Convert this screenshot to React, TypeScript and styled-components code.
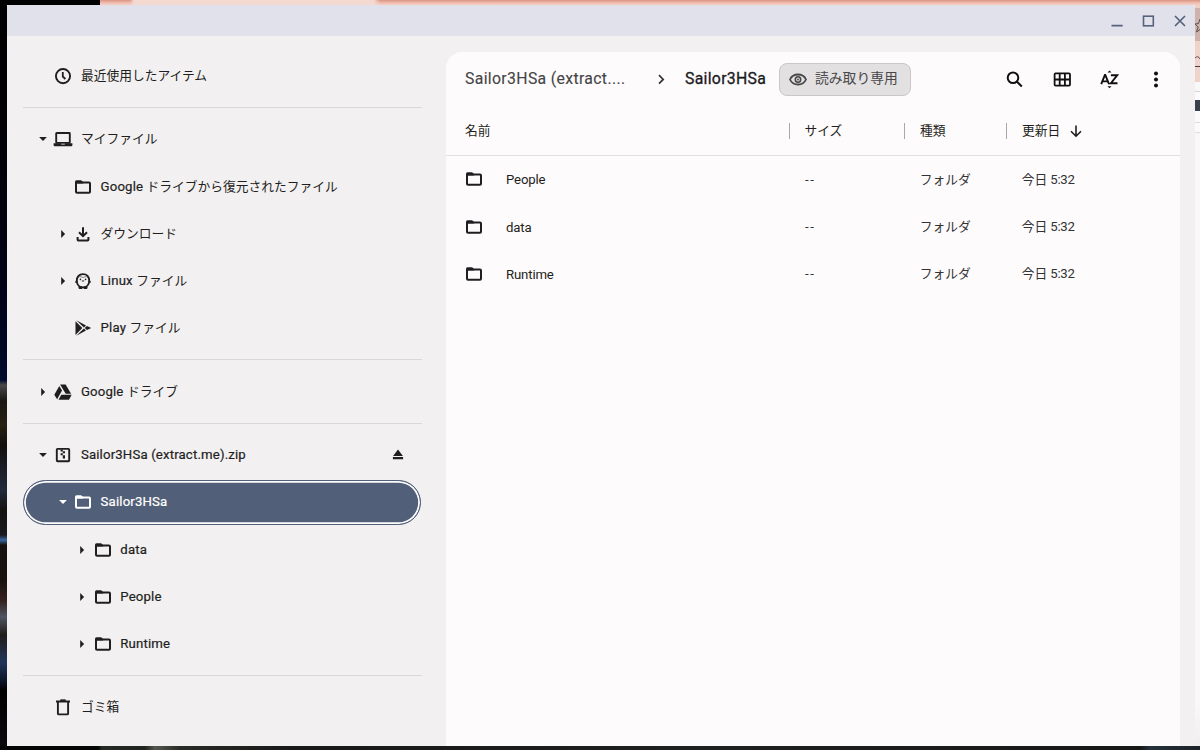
import React from "react";
import styled, { createGlobalStyle, css } from "styled-components";

const Global = createGlobalStyle`
  * { box-sizing: border-box; }
  html, body { margin: 0; padding: 0; overflow: hidden; }
  body {
    font-family: Roboto, "Noto Sans CJK JP", sans-serif;
    font-size: 12.7px;
    color: #1f1f21;
    -webkit-font-smoothing: antialiased;
  }
`;

const Desktop = styled.div`
  width: 1200px;
  height: 750px;
  display: grid;
  grid-template-columns: 6.5px 1188.5px 5px;
  grid-template-rows: 4.5px 741px 4.5px;
  overflow: hidden;
`;

const TopEdge = styled.div`
  grid-column: 1 / -1;
  background:
    linear-gradient(90deg, #000 100px, transparent 100px),
    linear-gradient(90deg, transparent 130px, #f3d9d0 134px, #f3d9d0 374px, transparent 380px),
    linear-gradient(#dd9c8c 0 1px, #eeb5a6 2px, #f3cfc5 5px);
`;

const LeftEdge = styled.div`
  background: linear-gradient(#000 0, #010106 120px, #000318 290px, #000a2c 375px, #4a4a4a 380px, #1a1714 396px, #2a2013 420px, #12100f 440px, #222a3c 485px, #14120f 505px, #17191f 530px, #3a68a0 535px, #15120f 540px, #17120c 575px, #33201f 595px, #505462 612px, #201c1b 630px, #22345c 657px, #0c1428 676px, #000 685px, #0a0a0e 740px);
`;

const RightEdge = styled.div`
  background: linear-gradient(
    #f0cfc5 0 3px, #cfb2ab 3px 36px, #efd3cb 36px 61px, #493f3e 61px 62px, #efd3cb 62px 77px,
    #f8f8f8 77px 86px, #d6d6d6 86px 87px, #fbfbfb 87px 95px, #38414b 95px 106px, #fbfbfb 106px 117px,
    #dcdcdc 117px 118px, #fbfbfb 118px 127px, #dedede 127px 128px, #f8f8f8 128px 700px, #efefef 740px);
  svg { display: block; }
`;

const BottomEdge = styled.div`
  grid-column: 1 / -1;
  background: linear-gradient(90deg, #050505 98px, #262a26 102px, #20241f 145px, #55584f 155px, #292b28 180px, #171817 300px, #1e201f 700px, #171717 1140px, #25313b 1150px, #1c2228 1200px);
`;

const Window = styled.div`
  display: flex;
  flex-direction: column;
  background: #f2f0f1;
  border-radius: 2px 2px 0 0;
  overflow: hidden;
`;

const TitleBar = styled.div`
  height: 31.5px;
  flex: none;
  background: #e1e1eb;
  display: flex;
  justify-content: flex-end;
  align-items: center;
  gap: 15.5px;
  padding-right: 7.5px;
  padding-top: 1px;
  color: #56637c;
  svg { display: block; }
`;

const Body = styled.div`
  flex: 1;
  display: flex;
  min-height: 0;
`;

const Sidebar = styled.nav`
  width: 439.5px;
  padding: 16.4px 24.5px 0 16px;
`;

const Divider = styled.div`
  height: 1px;
  margin: 7.65px 0;
  background: #d9d7d9;
`;

const TreeRow = styled.div<{ $depth: number; $selected?: boolean }>`
  height: 47.2px;
  padding-left: ${(p) => 12 + p.$depth * 19.7}px;
  padding-right: 18px;
  display: flex;
  align-items: center;
  ${(p) =>
    p.$selected &&
    css`
      height: 44.6px;
      margin: 1.3px 0.5px 1.3px 0.5px;
      border-radius: 23px;
      border: 1.4px solid #525f7a;
      box-shadow: inset 0 0 0 1.8px #fff;
      background: #525f78;
      padding-left: ${10.5 + p.$depth * 19.7}px;
      color: #fff;
    `}
  svg { display: block; flex: none; }
`;

const Twisty = styled.span`
  width: 17px;
  height: 16px;
  margin-right: 1.9px;
  display: flex;
  align-items: center;
  justify-content: center;
`;

const TreeIcon = styled.span`
  width: 20px;
  height: 20px;
  margin-right: 7.5px;
`;

const Label = styled.span<{ $light?: boolean; $spacing?: number }>`
  font-size: 13.2px;
  line-height: 18px;
  letter-spacing: ${(p) => p.$spacing ?? 0.16}px;
  -webkit-text-stroke: ${(p) => (p.$light ? 0 : 0.2)}px currentColor;
  white-space: pre;
`;

const KanaRun = styled.span<{ $size?: number }>`
  font-family: "Noto Sans CJK JP", sans-serif;
  font-size: ${(p) => p.$size ?? 12.75}px;
  line-height: 0;
  letter-spacing: 0;
  -webkit-text-stroke: 0;
`;

const Spacer = styled.span`
  flex: 1;
`;

const Panel = styled.main`
  width: 733.5px;
  margin-top: 16px;
  border-radius: 16px 16px 0 0;
  background: #fefbfc;
`;

const Toolbar = styled.div`
  height: 54px;
  padding: 0 13.5px 0 19px;
  display: flex;
  align-items: center;
  svg { display: block; flex: none; }
`;

const Crumb = styled.span<{ $current?: boolean; $width: number }>`
  width: ${(p) => p.$width}px;
  margin-top: -1px;
  font-size: 15.8px;
  letter-spacing: ${(p) => (p.$current ? 0.3 : 0.34)}px;
  -webkit-text-stroke: ${(p) => (p.$current ? 0.3 : 0.12)}px currentColor;
  color: ${(p) => (p.$current ? "#1a1a1c" : "#444446")};
  white-space: nowrap;
`;

const CrumbArrow = styled.span`
  width: 24px;
  margin-right: 12px;
  display: flex;
  justify-content: center;
`;

const ReadOnly = styled.div`
  width: 132px;
  height: 33px;
  border: 1px solid #c9c7c8;
  border-radius: 8px;
  background: #e2e0e1;
  color: #48484a;
  display: flex;
  align-items: center;
  gap: 7.5px;
  padding-left: 7.5px;
`;

const Tools = styled.div`
  margin-left: auto;
  display: flex;
  gap: 27.2px;
`;

const HeadRow = styled.div`
  height: 50px;
  display: grid;
  grid-template-columns: 340px 115.5px 102px 1fr;
  align-items: center;
  padding-left: 2.5px;
  border-bottom: 1px solid #e2e0e1;
`;

const HeadCell = styled.div<{ $first?: boolean }>`
  height: 16px;
  display: flex;
  align-items: center;
  padding-left: ${(p) => (p.$first ? 16.5 : 15)}px;
  border-left: ${(p) => (p.$first ? "none" : "1px solid #a9a7a8")};
  gap: 8.5px;
`;

const FileRow = styled.div`
  height: 47.2px;
  display: grid;
  grid-template-columns: 340px 115.5px 102px 1fr;
  align-items: center;
  padding-left: 2.5px;
  svg { display: block; }
`;

const NameCell = styled.div`
  display: flex;
  align-items: center;
  gap: 22px;
  padding: 0 0 0 15.5px;
`;

const FileName = styled.span`
  padding-top: 1.6px;
`;

const FileIcon = styled.span`
  margin-top: -0.4px;
`;

const Cell = styled.div<{ $inset?: number }>`
  padding-left: ${(p) => p.$inset ?? 15.8}px;
  color: #333335;
`;

const Kana = ({ children, size }: { children: React.ReactNode; size?: number }) => (
  <Label $light>
    <KanaRun $size={size}>{children}</KanaRun>
  </Label>
);

const FolderIcon = () => (
  <svg width="20" height="20" viewBox="0 0 20 20">
    <path d="M3.600 5.400h12.400a1 1 0 0 1 1 1v8.300a1 1 0 0 1-1 1H4a1 1 0 0 1-1-1V6z" fill="none" stroke="currentColor" strokeWidth="2" />
    <path d="M2 6.400V4.700q0-1.500 1.500-1.500h4.600l2 1.700v1.500z" fill="currentColor" />
  </svg>
);

const ClockIcon = () => (
  <svg width="20" height="20" viewBox="0 0 20 20" fill="none" stroke="currentColor">
    <circle cx="10" cy="10.100" r="7.100" strokeWidth="1.900" />
    <path d="M9.800 6v4.500l2.600 2.500" strokeWidth="1.800" />
  </svg>
);

const LaptopIcon = () => (
  <svg width="20" height="20" viewBox="0 0 20 20">
    <path d="M3.200 13.500V4.500q0-.5.5-.5h12.600q.5 0 .5.500v9" fill="none" stroke="currentColor" strokeWidth="1.900" />
    <path d="M.6 14.300h18.800v1.600q0 1.300-1.100 1.300H1.700Q.6 17.200.6 15.900z" fill="currentColor" />
    <path d="M2.600 13h14.800v1.700H2.600z" fill="currentColor" />
    <path d="M8.200 14.700h3.600v.9H8.200z" fill="#f2f0f1" />
  </svg>
);

const DownloadIcon = () => (
  <svg width="20" height="20" viewBox="0 0 20 20" fill="none" stroke="currentColor" strokeWidth="2">
    <path d="M10 3.200v8.600M6 8.200l4 4 4-4M4.600 13v2.700q0 .7.7.7h9.400q.7 0 .7-.7V13" />
  </svg>
);

const LinuxIcon = () => (
  <svg width="20" height="20" viewBox="0 0 20 20">
    <path d="M10 3.100c3.900 0 6.200 2.700 6.200 6.500 0 3.900-2.500 6.900-6.200 6.900s-6.200-3-6.200-6.900c0-3.800 2.300-6.500 6.200-6.500z" fill="none" stroke="currentColor" strokeWidth="1.800" />
    <path d="M4.100 7.400 1.800 11.400l2.500.4zM15.900 7.400l2.300 4-2.500.4zM5.500 15.200h3.600v2.800H6.700q-1.200 0-1.200-1.200zM10.900 15.200h3.600v1.600q0 1.200-1.200 1.200h-2.400z" fill="currentColor" />
    <path d="M4.500 7.700 6.700 5.400 10 6.500l3.300-1.100 2.200 2.300" fill="none" stroke="currentColor" strokeWidth=".5" />
    <circle cx="7.400" cy="8.400" r=".8" fill="currentColor" />
    <circle cx="12.600" cy="8.400" r=".8" fill="currentColor" />
    <path d="M8.500 9.400h3L10 11z" fill="currentColor" />
  </svg>
);

const PlayIcon = () => (
  <svg width="20" height="20" viewBox="0 0 20 20" fill="currentColor">
    <path d="M2.500 3.200v13.700L9.300 10z" />
    <path d="M3.300 2.300 13 7.500 10.900 9.400zM3.300 17.800 13 12.500l-2.100-1.900z" />
    <path d="M13.900 7.900 17.300 9.400q.9.600 0 1.200l-3.400 1.500L11.700 10z" />
  </svg>
);

const DriveIcon = () => (
  <svg width="20" height="20" viewBox="0 0 20 20" fill="currentColor">
    <path d="M7.100 2.600h5.500l5.500 9.200h-5.400z" />
    <path d="M6.300 4 9 8.600l-4.900 8.700-2.800-4.600z" />
    <path d="M8.300 12.800h10.400L16 17.700H5.500z" />
  </svg>
);

const ZipIcon = () => (
  <svg width="20" height="20" viewBox="0 0 20 20">
    <rect x="3.800" y="3.900" width="12.400" height="12.400" rx=".8" fill="none" stroke="currentColor" strokeWidth="1.900" />
    <path d="M7.600 4.500h2.200v2H7.600zM9.800 6.300H12v2H9.800zM7.600 8.300h2.200v2H7.600zM9.800 10.300H12v3.200H9.800z" fill="currentColor" />
  </svg>
);

const TrashIcon = () => (
  <svg width="20" height="20" viewBox="0 0 20 20" fill="none" stroke="currentColor" strokeWidth="1.900">
    <path d="M4.900 5v11.500q0 .9.900.9h8.400q.9 0 .9-.9V5M3 4.500h14" />
    <path d="M7.300 3.300h5.400" />
  </svg>
);

const EjectIcon = () => (
  <svg width="12" height="12" viewBox="0 0 12 12" fill="currentColor">
    <path d="M6 .6 10.900 6.900H1.100zM.9 8.100h10.200v2.100H.9z" />
  </svg>
);

const Arrow = ({ open }: { open: boolean }) => (
  <svg width="10" height="10" viewBox="0 0 10 10" fill="currentColor">
    {open ? <path d="M1.100 3h7.800L5 7.100z" /> : <path d="M3.200 1.100 7.100 5 3.200 8.900z" />}
  </svg>
);

const EyeIcon = () => (
  <svg width="20" height="20" viewBox="0 0 20 20" fill="none" stroke="currentColor">
    <path d="M2 10.500c1.400-3.100 4.400-5 8-5s6.600 1.900 8 5c-1.400 3.100-4.400 5-8 5s-6.600-1.900-8-5z" strokeWidth="1.800" />
    <circle cx="10" cy="10.500" r="2.700" strokeWidth="1.600" />
    <circle cx="10" cy="10.500" r=".9" fill="currentColor" stroke="none" />
  </svg>
);

const SearchIcon = () => (
  <svg width="20" height="20" viewBox="0 0 20 20" fill="none" stroke="#111" strokeWidth="2">
    <circle cx="9" cy="8.700" r="5.300" />
    <path d="m12.800 12.500 5 5" />
  </svg>
);

const GridIcon = () => (
  <svg width="20" height="20" viewBox="0 0 20 20" fill="none" stroke="#111" strokeWidth="1.800">
    <rect x="2.600" y="4.400" width="15.400" height="12.200" rx="1" />
    <path d="M7.700 4.400v12.200M12.900 4.400v12.200M2.600 10.500H18" />
  </svg>
);

const SortIcon = () => (
  <svg width="20" height="20" viewBox="0 0 20 20">
    <path d="M2.200 15.100 5.900 5.900h.4l3.700 9.200M3.500 12.400h5.300M11.900 6.300h6.200l-6.200 7.900h6.600" fill="none" stroke="#111" strokeWidth="1.900" />
    <path d="m8.500 3.400 2-2 2 2zM8.500 17.200l2 2 2-2z" fill="#111" />
  </svg>
);

const MoreIcon = () => (
  <svg width="20" height="20" viewBox="0 0 20 20" fill="#111">
    <circle cx="10" cy="4.600" r="2" />
    <circle cx="10" cy="10.500" r="2" />
    <circle cx="10" cy="16.400" r="2" />
  </svg>
);

type Item = {
  icon: React.ReactNode;
  depth: number;
  label?: string;
  kana?: string;
  open?: boolean;
  selected?: boolean;
  eject?: boolean;
};

const sections: Item[][] = [
  [{ icon: <ClockIcon />, depth: 0, kana: "最近使用したアイテム" }],
  [
    { icon: <LaptopIcon />, depth: 0, kana: "マイファイル", open: true },
    { icon: <FolderIcon />, depth: 1, label: "Google ", kana: "ドライブから復元されたファイル" },
    { icon: <DownloadIcon />, depth: 1, kana: "ダウンロード", open: false },
    { icon: <LinuxIcon />, depth: 1, label: "Linux ", kana: "ファイル", open: false },
    { icon: <PlayIcon />, depth: 1, label: "Play ", kana: "ファイル" },
  ],
  [{ icon: <DriveIcon />, depth: 0, label: "Google ", kana: "ドライブ", open: false }],
  [
    { icon: <ZipIcon />, depth: 0, label: "Sailor3HSa (extract.me).zip", open: true, eject: true },
    { icon: <FolderIcon />, depth: 1, label: "Sailor3HSa", open: true, selected: true },
    { icon: <FolderIcon />, depth: 2, label: "data", open: false },
    { icon: <FolderIcon />, depth: 2, label: "People", open: false },
    { icon: <FolderIcon />, depth: 2, label: "Runtime", open: false },
  ],
  [{ icon: <TrashIcon />, depth: 0, kana: "ゴミ箱" }],
];

const files = ["People", "data", "Runtime"];

export default function App() {
  return (
    <Desktop>
      <Global />
      <TopEdge />
      <LeftEdge />
      <Window>
        <TitleBar>
          <svg width="16" height="16" viewBox="0 0 16 16"><path d="M2.500 12.600h11.200" stroke="currentColor" strokeWidth="1.600" /></svg>
          <svg width="16" height="16" viewBox="0 0 16 16"><rect x="3.500" y="3.200" width="9.800" height="9.600" fill="none" stroke="currentColor" strokeWidth="1.600" /></svg>
          <svg width="16" height="16" viewBox="0 0 16 16"><path d="m3 3 10 10M13 3 3 13" stroke="currentColor" strokeWidth="1.700" /></svg>
        </TitleBar>
        <Body>
          <Sidebar>
            {sections.map((items, s) => (
              <React.Fragment key={s}>
                {s > 0 && <Divider />}
                {items.map((it, i) => (
                  <TreeRow key={i} $depth={it.depth} $selected={it.selected}>
                    <Twisty>{it.open !== undefined && <Arrow open={it.open} />}</Twisty>
                    <TreeIcon>{it.icon}</TreeIcon>
                    <Label>
                      {it.label}
                      {it.kana && <KanaRun>{it.kana}</KanaRun>}
                    </Label>
                    {it.eject && (
                      <>
                        <Spacer />
                        <EjectIcon />
                      </>
                    )}
                  </TreeRow>
                ))}
              </React.Fragment>
            ))}
          </Sidebar>
          <Panel>
            <Toolbar>
              <Crumb $width={184}>Sailor3HSa (extract....</Crumb>
              <CrumbArrow>
                <svg width="12" height="12" viewBox="0 0 12 12"><path d="m4 2.200 4.200 4.200L4 10.600" fill="none" stroke="#333" strokeWidth="1.700" /></svg>
              </CrumbArrow>
              <Crumb $width={94} $current>Sailor3HSa</Crumb>
              <ReadOnly>
                <EyeIcon />
                <Kana size={13.8}>読み取り専用</Kana>
              </ReadOnly>
              <Tools>
                <SearchIcon />
                <GridIcon />
                <SortIcon />
                <MoreIcon />
              </Tools>
            </Toolbar>
            <HeadRow>
              <HeadCell $first><Kana>名前</Kana></HeadCell>
              <HeadCell><Kana>サイズ</Kana></HeadCell>
              <HeadCell><Kana>種類</Kana></HeadCell>
              <HeadCell>
                <Kana>更新日</Kana>
                <svg width="14" height="14" viewBox="0 0 14 14"><path d="M7 1.500v10.800M2 7.200l5 5 5-5" fill="none" stroke="#1f1f21" strokeWidth="1.600" /></svg>
              </HeadCell>
            </HeadRow>
            {files.map((f) => (
              <FileRow key={f}>
                <NameCell>
                  <FileIcon><FolderIcon /></FileIcon>
                  <FileName><Label $light $spacing={-0.15}>{f}</Label></FileName>
                </NameCell>
                <Cell $inset={16.6}><Label $light $spacing={1.500}>--</Label></Cell>
                <Cell><Kana>フォルダ</Kana></Cell>
                <Cell><Kana>今日</Kana><Label $light $spacing={-0.3}> 5:32</Label></Cell>
              </FileRow>
            ))}
          </Panel>
        </Body>
      </Window>
      <RightEdge>
        <svg width="5" height="70" viewBox="0 0 5 70" fill="none" stroke="#5d504d">
          <path d="M5 14 3.500 18.500 0 19l3.200 3L1.500 27 5 24.500M0 53q3-3 5 1" />
        </svg>
      </RightEdge>
      <BottomEdge />
    </Desktop>
  );
}
